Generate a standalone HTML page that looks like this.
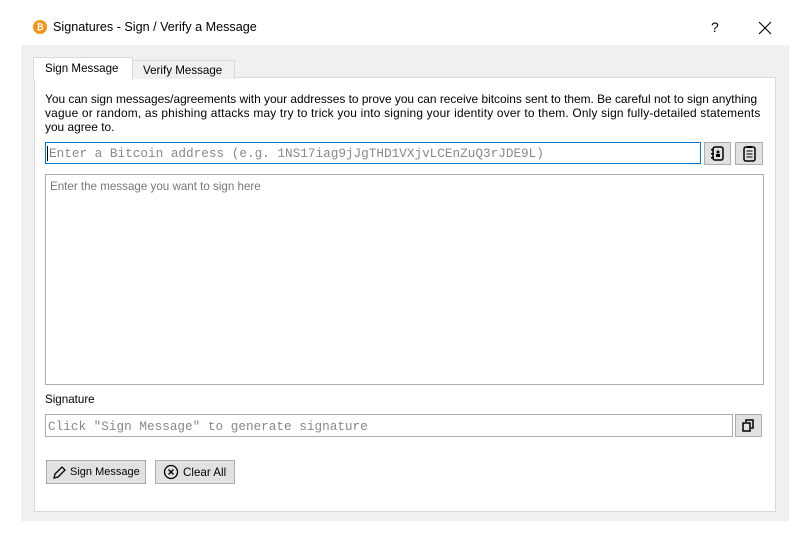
<!DOCTYPE html>
<html><head><style>
body{margin:0;width:808px;height:537px;background:#fff;font-family:"Liberation Sans",sans-serif;font-size:11.6px;color:#000;position:relative;overflow:hidden}
.a{position:absolute;white-space:nowrap}
.mono{font-family:"Liberation Mono",monospace;font-size:12.7px;color:#888}
.btn{position:absolute;background:#e1e1e1;border:1px solid #adadad;box-sizing:border-box}
</style></head><body>
<div class="a" style="left:33px;top:20px;width:14px;height:14px;border-radius:50%;background:#f7931a;color:#fff;font-size:9px;font-weight:bold;text-align:center;line-height:14px">₿</div>
<div class="a" style="left:53px;top:20px;font-size:12.6px">Signatures - Sign / Verify a Message</div>
<div class="a" style="left:711px;top:19px;font-size:14px">?</div>
<svg class="a" style="left:758px;top:21px" width="14" height="14"><path d="M1 1l12 12M13 1L1 13" stroke="#000" stroke-width="1.1"/></svg>
<div class="a" style="left:21px;top:45px;width:768px;height:476px;background:#f0f0f0"></div>
<div class="a" style="left:34px;top:77px;width:740px;height:433px;background:#fff;border:1px solid #d9d9d9"></div>
<div class="a" style="left:132px;top:60px;width:101px;height:18px;background:#f0f0f0;border:1px solid #d9d9d9;border-bottom:none"></div>
<div class="a" style="left:143px;top:64px">Verify Message</div>
<div class="a" style="left:33px;top:57px;width:98px;height:22px;background:#fff;border:1px solid #d9d9d9;border-bottom:none"></div>
<div class="a" style="left:45px;top:62px">Sign Message</div>
<div class="a" style="left:45px;top:92px;line-height:14px;font-size:11.9px">You can sign messages/agreements with your addresses to prove you can receive bitcoins sent to them. Be careful not to sign anything<br><span style="letter-spacing:0.2px">vague or random, as phishing attacks may try to trick you into signing your identity over to them. Only sign fully-detailed statements</span><br>you agree to.</div>
<div class="a" style="left:45px;top:142px;width:656px;height:22px;border:1px solid #0078d7;box-sizing:border-box"></div>
<div class="a mono" style="left:47px;top:146px;border-left:1px solid #000;padding-left:1px">Enter a Bitcoin address (e.g. 1NS17iag9jJgTHD1VXjvLCEnZuQ3rJDE9L)</div>
<div class="btn" style="left:704px;top:142px;width:27px;height:23px"><svg width="25" height="21"><rect x="8" y="4" width="10" height="13" rx="2" fill="none" stroke="#000" stroke-width="1.5"/><rect x="6" y="6" width="3" height="1.5"/><rect x="6" y="10" width="3" height="1.5"/><rect x="6" y="14" width="3" height="1.5"/><circle cx="13" cy="9" r="1.5"/><rect x="11" y="11" width="4" height="3"/></svg></div>
<div class="btn" style="left:735px;top:142px;width:28px;height:23px"><svg width="26" height="21"><rect x="8" y="4" width="11" height="14" rx="2" fill="none" stroke="#000" stroke-width="1.5"/><rect x="11" y="3" width="5" height="2"/><path d="M10.5 8h6M10.5 11h6M10.5 14h6" stroke="#000"/></svg></div>
<div class="a" style="left:45px;top:174px;width:719px;height:211px;border:1px solid #adadad;box-sizing:border-box"></div>
<div class="a" style="left:50px;top:180px;color:#777">Enter the message you want to sign here</div>
<div class="a" style="left:45px;top:393px">Signature</div>
<div class="a" style="left:45px;top:414px;width:688px;height:23px;border:1px solid #adadad;box-sizing:border-box"></div>
<div class="a mono" style="left:48px;top:419px">Click "Sign Message" to generate signature</div>
<div class="btn" style="left:735px;top:414px;width:27px;height:23px"><svg width="25" height="21"><rect x="7" y="8" width="7" height="8" fill="none" stroke="#000" stroke-width="1.5"/><path d="M10 7V5h7v8h-2" fill="none" stroke="#000" stroke-width="1.5"/></svg></div>
<div class="btn" style="left:46px;top:460px;width:100px;height:24px"><svg class="a" style="left:4px;top:4px" width="16" height="16"><path d="M3 13l1-4 7-7 3 3-7 7z" fill="none" stroke="#000" stroke-width="1.3"/></svg><span class="a" style="left:23px;top:5px;font-size:11px">Sign Message</span></div>
<div class="btn" style="left:155px;top:460px;width:80px;height:24px"><svg class="a" style="left:7px;top:3px" width="16" height="16"><circle cx="8" cy="8" r="6.5" fill="none" stroke="#000" stroke-width="1.3"/><path d="M5.5 5.5l5 5M10.5 5.5l-5 5" stroke="#000" stroke-width="1.3"/></svg><span class="a" style="left:27px;top:5px">Clear All</span></div>
</body></html>
